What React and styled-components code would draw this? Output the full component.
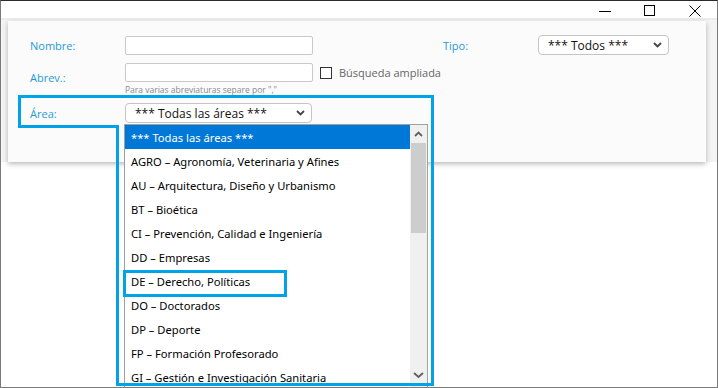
import React from "react";
import styled, { createGlobalStyle } from "styled-components";

const GlobalStyle = createGlobalStyle`
  html, body { margin: 0; padding: 0; background: #ffffff; overflow: hidden; }
  * { box-sizing: border-box; }
`;

const Window = styled.div`
  position: relative;
  width: 718px;
  height: 388px;
  background: #ffffff;
  border: 1px solid #7a7a7a;
  border-top-color: #2b2b2b;
  overflow: hidden;
  font-family: "Open Sans", "Noto Sans", sans-serif;
`;

const TitleBar = styled.div`
  height: 19px;
  display: flex;
  justify-content: flex-end;
  background: #ffffff;
  border-bottom: 2px solid #ececec;
`;

const WinButton = styled.div`
  width: 45px;
  height: 19px;
  display: flex;
  align-items: center;
  justify-content: center;
`;

const Content = styled.div`
  padding: 1px 11px 0 7px;
  background: linear-gradient(#f4f4f4, #f4f4f4) top / 100% 143px no-repeat, #ffffff;
`;

const Panel = styled.div`
  height: 141px;
  background: #fbfbfb;
  box-shadow: 0 2px 5px rgba(0, 0, 0, 0.28);
  padding: 14px 0 0 22px;
  display: flex;
  flex-direction: column;
`;

const Row = styled.div`
  display: flex;
  align-items: ${(p) => (p.$top ? "flex-start" : "center")};
  margin-top: ${(p) => p.$mt || 0}px;
`;

const Label = styled.div`
  width: ${(p) => p.$w || 95}px;
  color: #1e9ad6;
  font-size: 11px;
  padding-top: ${(p) => p.$pt || 0}px;
`;

const TextInput = styled.div`
  width: 188px;
  height: 19px;
  background: #ffffff;
  border: 1px solid #c9c9c9;
  border-radius: 2px;
`;

const Select = styled.div`
  width: ${(p) => p.$w}px;
  height: 20px;
  background: #ffffff;
  border: 1px solid #c4c4c4;
  border-radius: 4px;
  display: flex;
  align-items: center;
  justify-content: space-between;
  padding: 0 6px 0 9px;
  font-size: 12px;
  color: #111;
`;

const Column = styled.div`
  display: flex;
  flex-direction: column;
`;

const Hint = styled.div`
  font-size: 8.5px;
  color: #8a8a8a;
  margin-top: 2px;
`;

const CheckBox = styled.div`
  width: 12px;
  height: 12px;
  border: 1px solid #333;
  background: #fff;
  margin: 4px 7px 0 7px;
`;

const CheckLabel = styled.div`
  font-size: 11px;
  color: #666;
  margin-top: 2px;
`;

const Spacer = styled.div`
  width: ${(p) => p.$w}px;
`;

const DropList = styled.div`
  position: absolute;
  left: 123px;
  top: 123px;
  width: 304px;
  height: 280px;
  background: #ffffff;
  border: 1px solid #a0a0a0;
  display: flex;
`;

const Items = styled.div`
  flex: 1;
  display: flex;
  flex-direction: column;
`;

const Item = styled.div`
  height: 24px;
  flex: none;
  display: flex;
  align-items: center;
  padding-left: 6px;
  font-family: "Noto Sans", "Open Sans", sans-serif;
  font-size: 11.2px;
  color: ${(p) => (p.$sel ? "#ffffff" : "#000000")};
  background: ${(p) => (p.$sel ? "#0078d7" : "transparent")};
`;

const ScrollBar = styled.div`
  width: 17px;
  background: #f0f0f0;
  display: flex;
  flex-direction: column;
  align-items: center;
`;

const ScrollArrow = styled.div`
  height: 17px;
  width: 17px;
  display: flex;
  align-items: center;
  justify-content: center;
`;

const Thumb = styled.div`
  width: 15px;
  height: 90px;
  background: #cdcdcd;
  margin-top: 1px;
`;

const Overlay = styled.svg`
  position: absolute;
  left: -1px;
  top: -1px;
  pointer-events: none;
`;

const Chevron = ({ color = "#444", up = false }) => (
  <svg width="9" height="6" viewBox="0 0 9 6">
    <path
      d={up ? "M1 5 L4.5 1.5 L8 5" : "M1 1 L4.5 4.5 L8 1"}
      fill="none"
      stroke={color}
      strokeWidth="1.8"
    />
  </svg>
);

const items = [
  "*** Todas las áreas ***",
  "AGRO – Agronomía, Veterinaria y Afines",
  "AU – Arquitectura, Diseño y Urbanismo",
  "BT – Bioética",
  "CI – Prevención, Calidad e Ingeniería",
  "DD – Empresas",
  "DE – Derecho, Políticas",
  "DO – Doctorados",
  "DP – Deporte",
  "FP – Formación Profesorado",
  "GI – Gestión e Investigación Sanitaria",
  "HU – Humanidades",
];

export default function App() {
  return (
    <>
      <GlobalStyle />
      <Window>
        <TitleBar>
          <WinButton>
            <svg width="12" height="10" viewBox="0 0 12 10">
              <path d="M0 5.5 H12" stroke="#000" strokeWidth="1" />
            </svg>
          </WinButton>
          <WinButton>
            <svg width="11" height="11" viewBox="0 0 11 11">
              <rect x="0.5" y="0.5" width="10" height="10" fill="none" stroke="#000" strokeWidth="1" />
            </svg>
          </WinButton>
          <WinButton>
            <svg width="12" height="12" viewBox="0 0 12 12">
              <path d="M0.5 0.5 L11.5 11.5 M11.5 0.5 L0.5 11.5" stroke="#000" strokeWidth="1" />
            </svg>
          </WinButton>
        </TitleBar>
        <Content>
          <Panel>
            <Row>
              <Label>Nombre:</Label>
              <TextInput />
              <Spacer $w={130} />
              <Label>Tipo:</Label>
              <Select $w={131}>
                <span>*** Todos ***</span>
                <Chevron />
              </Select>
            </Row>
            <Row $top $mt={8}>
              <Label $pt={7}>Abrev.:</Label>
              <Column>
                <TextInput />
                <Hint>Para varias abreviaturas separe por ","</Hint>
              </Column>
              <CheckBox />
              <CheckLabel>Búsqueda ampliada</CheckLabel>
            </Row>
            <Row $mt={8}>
              <Label>Área:</Label>
              <Select $w={187}>
                <span>*** Todas las áreas ***</span>
                <Chevron />
              </Select>
            </Row>
          </Panel>
        </Content>
        <DropList>
          <Items>
            {items.map((t, i) => (
              <Item key={t} $sel={i === 0}>
                {t}
              </Item>
            ))}
          </Items>
          <ScrollBar>
            <ScrollArrow>
              <Chevron color="#606060" up />
            </ScrollArrow>
            <Thumb />
          </ScrollBar>
        </DropList>
        <Overlay width="718" height="388" viewBox="0 0 718 388">
          <path
            d="M19.5 96.5 H432.5 V384.5 H117.5 V126.5 H19.5 Z"
            fill="none"
            stroke="#00a2e8"
            strokeWidth="3"
          />
          <rect x="124.5" y="271.5" width="161" height="24" fill="none" stroke="#00a2e8" strokeWidth="3" />
          <g transform="translate(414 373)">
            <path d="M0 0 L4.5 4 L9 0" fill="none" stroke="#606060" strokeWidth="1.8" />
          </g>
        </Overlay>
      </Window>
    </>
  );
}
